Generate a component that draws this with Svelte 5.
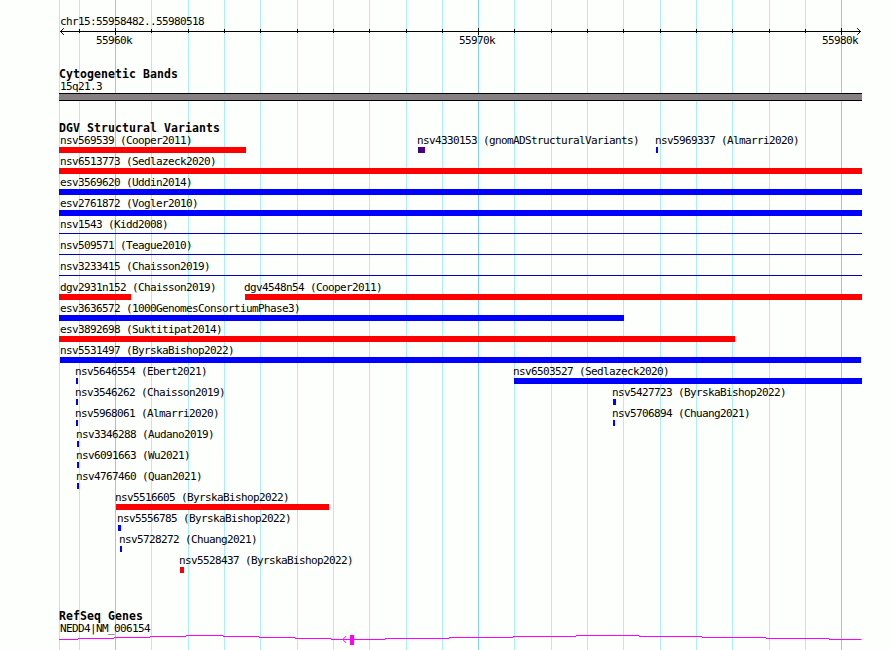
<script>
	const left = 59;
	const right = 862;

	const majorTicks = [
		{ x: 115, label: '55960k' },
		{ x: 478, label: '55970k' },
		{ x: 841, label: '55980k' }
	];

	const minorTicks = [
		79, 151, 188, 224, 260, 297, 333, 369, 406, 442, 514, 551, 587, 623, 660, 696, 732, 769, 805
	];

	// one array per row, start and end are panel pixels
	const rows = [
		[
			{ name: 'nsv569539 (Cooper2011)', start: 59, end: 246, type: 'loss' },
			{ name: 'nsv4330153 (gnomADStructuralVariants)', start: 418, end: 425, type: 'complex' },
			{ name: 'nsv5969337 (Almarri2020)', start: 656, end: 658, type: 'gain' }
		],
		[{ name: 'nsv6513773 (Sedlazeck2020)', start: 59, end: 862, type: 'loss' }],
		[{ name: 'esv3569620 (Uddin2014)', start: 59, end: 862, type: 'gain' }],
		[{ name: 'esv2761872 (Vogler2010)', start: 59, end: 862, type: 'gain' }],
		[{ name: 'nsv1543 (Kidd2008)', start: 59, end: 862, type: 'thin' }],
		[{ name: 'nsv509571 (Teague2010)', start: 59, end: 862, type: 'thin' }],
		[{ name: 'nsv3233415 (Chaisson2019)', start: 59, end: 862, type: 'thin' }],
		[
			{ name: 'dgv2931n152 (Chaisson2019)', start: 59, end: 131, type: 'loss' },
			{ name: 'dgv4548n54 (Cooper2011)', start: 245, end: 862, type: 'loss' }
		],
		[{ name: 'esv3636572 (1000GenomesConsortiumPhase3)', start: 59, end: 624, type: 'gain' }],
		[{ name: 'esv3892698 (Suktitipat2014)', start: 59, end: 735, type: 'loss' }],
		[{ name: 'nsv5531497 (ByrskaBishop2022)', start: 60, end: 861, type: 'gain' }],
		[
			{ name: 'nsv5646554 (Ebert2021)', start: 76, end: 78, type: 'gain' },
			{ name: 'nsv6503527 (Sedlazeck2020)', start: 514, end: 862, type: 'gain' }
		],
		[
			{ name: 'nsv3546262 (Chaisson2019)', start: 76, end: 78, type: 'gain' },
			{ name: 'nsv5427723 (ByrskaBishop2022)', start: 613, end: 616, type: 'gain' }
		],
		[
			{ name: 'nsv5968061 (Almarri2020)', start: 76, end: 78, type: 'gain' },
			{ name: 'nsv5706894 (Chuang2021)', start: 613, end: 615, type: 'gain' }
		],
		[{ name: 'nsv3346288 (Audano2019)', start: 77, end: 79, type: 'gain' }],
		[{ name: 'nsv6091663 (Wu2021)', start: 77, end: 79, type: 'gain' }],
		[{ name: 'nsv4767460 (Quan2021)', start: 77, end: 79, type: 'gain' }],
		[{ name: 'nsv5516605 (ByrskaBishop2022)', start: 116, end: 329, type: 'loss' }],
		[{ name: 'nsv5556785 (ByrskaBishop2022)', start: 118, end: 121, type: 'gain' }],
		[{ name: 'nsv5728272 (Chuang2021)', start: 120, end: 122, type: 'gain' }],
		[{ name: 'nsv5528437 (ByrskaBishop2022)', start: 180, end: 184, type: 'loss' }]
	];

	// intron steps: x, width, y
	const introns = [
		[59, 19, 4],
		[78, 36, 3],
		[114, 36, 2],
		[150, 36, 1],
		[186, 37, 0],
		[223, 36, 1],
		[259, 36, 2],
		[295, 36, 3],
		[331, 54, 4],
		[385, 64, 3],
		[449, 64, 2],
		[513, 63, 1],
		[576, 63, 0],
		[639, 63, 1],
		[702, 64, 2],
		[766, 63, 3],
		[829, 32, 4]
	];

	const labelStart = (x) => Math.max(left + 1, x - 1);
</script>

<div class="browser">
	<svg class="grid" width="890" height="650" shape-rendering="crispEdges">
		<rect class="minor" x={left} y="0" width="1" height="650" />
		{#each minorTicks as x}
			<rect class="minor" {x} y="0" width="1" height="650" />
		{/each}
		{#each majorTicks as tick}
			<rect class="major" x={tick.x} y="0" width="1" height="650" />
		{/each}
	</svg>

	<svg class="ruler" width="890" height="68">
		<text x="60" y="25">chr15:55958482..55980518</text>
		<g shape-rendering="crispEdges">
			<rect x="60" y="31" width="801" height="1" />
			{#each minorTicks as x}
				<rect {x} y="29" width="1" height="4" />
			{/each}
			{#each majorTicks as tick}
				<rect x={tick.x} y="28" width="1" height="7" />
			{/each}
		</g>
		<path d="M63.8 28.2L60.5 31.5l3.3 3.3M857.2 28.2l3.3 3.3l-3.3 3.3" />
		{#each majorTicks as tick}
			<text x={tick.x - 19} y="44">{tick.label}</text>
		{/each}
	</svg>

	<section class="cyto">
		<h2>Cytogenetic Bands</h2>
		<p>15q21.3</p>
		<div class="band"></div>
	</section>

	<section class="variants">
		<h2>DGV Structural Variants</h2>
		{#each rows as row}
			<div class="row">
				{#each row as item}
					<div class="feature">
						<span class="name" style="margin-left: {labelStart(item.start)}px">{item.name}</span>
						<div
							class="bar {item.type}"
							style="margin-left: {item.start}px; width: {Math.min(item.end, right) - item.start}px"
						></div>
					</div>
				{/each}
			</div>
		{/each}
	</section>

	<section class="genes">
		<h2>RefSeq Genes</h2>
		<p>NEDD4|NM_006154</p>
		<svg class="gene" width="890" height="15">
			<g shape-rendering="crispEdges">
				{#each introns as [x, width, y]}
					<rect {x} {y} {width} height="1" />
				{/each}
				<rect x="350" y="0" width="4" height="10" />
			</g>
			<path d="M346 1.2L342.8 4.5l3.2 3.3" />
		</svg>
	</section>
</div>

<style>
	:global(body) {
		margin: 0;
		background: #fdfffc;
	}

	.browser {
		position: relative;
		width: 890px;
		height: 650px;
		overflow: hidden;
		color: #000;
		font-family: 'DejaVu Sans Mono', monospace;
		font-size: 11px;
		line-height: 14px;
		letter-spacing: -0.622px;
		white-space: nowrap;
	}

	svg {
		display: block;
	}

	.grid {
		position: absolute;
		top: 0;
		left: 0;
		z-index: -1;
	}

	.minor {
		fill: #afeeee;
	}

	.major {
		fill: #87ceeb;
	}

	.ruler path {
		fill: none;
		stroke: #000;
	}

	h2 {
		height: 12px;
		margin: 0 0 0 59px;
		font-size: 11.5px;
		line-height: 12px;
		font-weight: bold;
		letter-spacing: 0.077px;
	}

	p {
		margin: 0 0 0 60px;
		height: 13px;
	}

	.cyto {
		height: 54px;
	}

	.band {
		box-sizing: border-box;
		width: 803px;
		height: 8px;
		margin-left: 59px;
		border: solid #000;
		border-width: 1px 0;
		background: #848083;
	}

	.variants {
		height: 488px;
	}

	.row {
		display: grid;
		height: 21px;
	}

	.feature {
		grid-area: 1 / 1;
	}

	.name {
		display: block;
		height: 13px;
	}

	.bar {
		height: 6px;
	}

	.loss {
		background: #f00;
	}

	.gain {
		background: #00f;
	}

	.complex {
		background: #4b0082;
	}

	.thin {
		height: 1px;
		margin-top: 2px;
		background: #0000c8;
	}

	.gene {
		fill: #f0f;
	}

	.gene path {
		fill: none;
		stroke: #f0f;
	}
</style>
